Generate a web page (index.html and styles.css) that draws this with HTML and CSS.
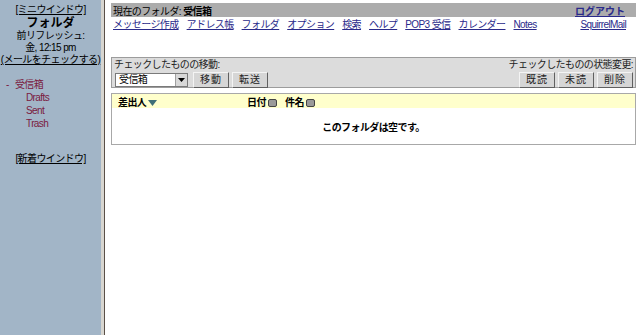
FILE: index.html
```html
<!DOCTYPE html>
<html lang="ja">
<head>
<meta charset="utf-8">
<link rel="stylesheet" href="styles.css">
</head>
<body>
<div class="frames">
  <aside class="left">
    <div class="lnk-center"><a href="#" class="plain">[ミニウインドウ]</a></div>
    <div class="ftitle">フォルダ</div>
    <div class="small">前リフレッシュ:</div>
    <div class="small">金, 12:15 pm</div>
    <div class="small"><a href="#" class="plain">(メールをチェックする)</a></div>
    <ul class="folders">
      <li class="inbox"><span class="dash">-</span> <a href="#" class="fold">受信箱</a></li>
      <li class="sub"><a href="#" class="fold">Drafts</a></li>
      <li class="sub"><a href="#" class="fold">Sent</a></li>
      <li class="sub"><a href="#" class="fold">Trash</a></li>
    </ul>
    <div class="lnk-center newwin"><a href="#" class="plain">[新着ウインドウ]</a></div>
  </aside>
  <div class="divider"></div>
  <main class="right">
    <div class="topbar">
      <span>現在のフォルダ: <b>受信箱</b></span>
      <a href="#" class="logout">ログアウト</a>
    </div>
    <div class="navrow">
      <nav class="nav">
        <a href="#">メッセージ作成</a>
        <a href="#">アドレス帳</a>
        <a href="#">フォルダ</a>
        <a href="#">オプション</a>
        <a href="#">検索</a>
        <a href="#">ヘルプ</a>
        <a href="#">POP3 受信</a>
        <a href="#">カレンダー</a>
        <a href="#">Notes</a>
      </nav>
      <a href="#" class="sm">SquirrelMail</a>
    </div>
    <div class="movebox">
      <div class="mcol">
        <div class="mlabel">チェックしたものの移動:</div>
        <div class="mctrls">
          <span class="select"><span class="sel-text">受信箱</span><span class="sel-btn"><svg width="7" height="4" viewBox="0 0 7 4"><path d="M0 0h7L3.5 4z" fill="#000"/></svg></span></span>
          <button class="btn">移動</button>
          <button class="btn">転送</button>
        </div>
      </div>
      <div class="mcol rightcol">
        <div class="mlabel">チェックしたものの状態変更:</div>
        <div class="mctrls">
          <button class="btn">既読</button>
          <button class="btn">未読</button>
          <button class="btn">削除</button>
        </div>
      </div>
    </div>
    <div class="msgtable">
      <div class="thead">
        <span class="from">差出人 <svg class="tri" width="9" height="6" viewBox="0 0 9 6"><path d="M0 0h9L4.5 6z" fill="#3f6f78"/></svg></span>
        <span class="date">日付 <span class="sorticon"></span></span>
        <span class="subj">件名 <span class="sorticon"></span></span>
      </div>
      <div class="empty">このフォルダは空です。</div>
    </div>
  </main>
</div>
</body>
</html>
```
FILE: styles.css
```css
html, body {
  margin: 0;
  padding: 0;
  height: 100%;
}
body {
  font-family: "Liberation Sans", "Noto Sans CJK JP", sans-serif;
  font-size: 10px;
  color: #000;
  background: #fff;
}
.frames {
  display: flex;
  height: 335px;
}
.left {
  width: 101px;
  flex: none;
  background: #a2b5c7;
  padding-top: 4px;
  text-align: center;
  letter-spacing: -0.6px;
  line-height: 12px;
}
.plain {
  color: #000;
  text-decoration: underline;
}
.ftitle {
  font-weight: bold;
  font-size: 12px;
  line-height: 13px;
  margin-top: 1px;
  letter-spacing: 0;
}
.small {
  line-height: 12px;
}
.folders {
  list-style: none;
  margin: 12px 0 0 0;
  padding: 0;
  text-align: left;
}
.folders li {
  line-height: 13px;
}
.inbox {
  padding-left: 6px;
}
.dash {
  color: #7a1a40;
  margin-right: 4px;
}
.sub {
  padding-left: 26px;
}
.fold {
  color: #7a1a40;
  text-decoration: none;
}
.newwin {
  margin-top: 23px;
}
.divider {
  width: 4px;
  flex: none;
  background: #d8d6d0;
  border-right: 1px solid #5a5048;
  box-sizing: border-box;
}
.right {
  flex: 1;
  padding: 3px 4px 0 6px;
  letter-spacing: -0.6px;
}
.topbar {
  display: flex;
  justify-content: space-between;
  align-items: center;
  background: #acacac;
  height: 14px;
  padding: 0 11px 0 2px;
  font-size: 10px;
}
.logout {
  color: #2a2a8a;
  font-weight: bold;
  font-size: 10px;
  letter-spacing: 0;
}
.navrow {
  display: flex;
  justify-content: space-between;
  align-items: baseline;
  height: 16px;
  line-height: 16px;
  padding: 0 10px 0 2px;
}
.nav {
  display: flex;
  align-items: baseline;
  gap: 8px;
}
.nav a, .sm {
  color: #2a2a8a;
  text-decoration: underline;
}
.movebox {
  display: flex;
  justify-content: space-between;
  margin-top: 24px;
  background: #dcdcdc;
  border: 1px solid #9c9c9c;
  padding: 1px 2px 1px 2px;
  box-sizing: border-box;
  height: 31px;
}
.mcol {
  display: flex;
  flex-direction: column;
}
.rightcol {
  align-items: flex-end;
}
.mlabel {
  line-height: 12px;
  color: #222;
}
.mctrls {
  display: flex;
  gap: 3px;
  align-items: center;
  margin-top: 1px;
}
.select {
  display: flex;
  width: 73px;
  height: 14px;
  background: #fff;
  border: 1px solid #7a7a7a;
  box-sizing: border-box;
  margin-right: 2px;
  margin-left: 1px;
  font-size: 10px;
  line-height: 12px;
}
.sel-text {
  flex: 1;
  padding-left: 3px;
}
.sel-btn {
  width: 11px;
  background: #d8d8d8;
  border-left: 1px solid #a0a0a0;
  display: flex;
  align-items: center;
  justify-content: center;
}
.btn {
  font-family: inherit;
  font-size: 10px;
  letter-spacing: 1px;
  height: 16px;
  padding: 0 6px;
  background: #d6d6d6;
  border: 1px solid;
  border-color: #f4f4f4 #606060 #606060 #f4f4f4;
  color: #222;
  line-height: 12px;
}
.msgtable {
  margin-top: 5px;
  border: 1px solid #a8a8a8;
  height: 52px;
  box-sizing: border-box;
}
.thead {
  display: flex;
  align-items: center;
  height: 14px;
  background: #ffffcc;
  font-weight: bold;
  padding-left: 6px;
}
.from {
  width: 129px;
}
.tri {
  vertical-align: middle;
}
.date {
  margin-right: 8px;
}
.sorticon {
  display: inline-block;
  width: 7px;
  height: 6px;
  background: #9a9a9a;
  border: 1px solid #444;
  border-radius: 2px;
  vertical-align: middle;
}
.empty {
  text-align: center;
  font-weight: bold;
  margin-top: 11px;
  font-size: 10px;
}
```
